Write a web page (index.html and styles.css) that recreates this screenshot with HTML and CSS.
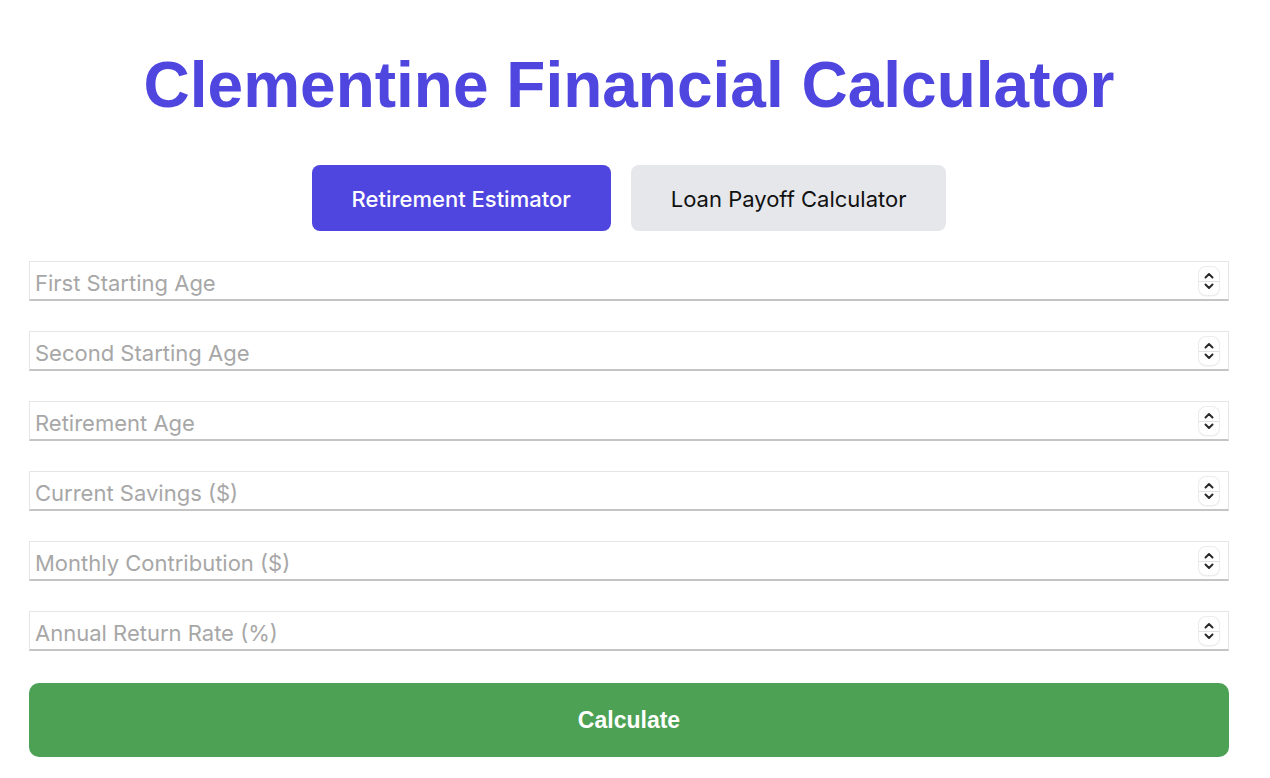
FILE: index.html
```html
<!DOCTYPE html>
<html>
<head>
<meta charset="utf-8">
<title>Clementine Financial Calculator</title>
<link rel="stylesheet" href="styles.css">
</head>
<body>
<main class="app">
  <h1 class="title">Clementine Financial Calculator</h1>
  <div class="tabs">
    <button class="tab tab-active">Retirement Estimator</button>
    <button class="tab">Loan Payoff Calculator</button>
  </div>
  <form class="form">
    <div class="field"><input class="input" type="text" placeholder="First Starting Age"><span class="spin"><svg viewBox="0 0 20 28" width="20" height="28"><path d="M6.5 10.5 L10 7 L13.5 10.5" /><path d="M6.5 17.5 L10 21 L13.5 17.5" /></svg></span></div>
    <div class="field"><input class="input" type="text" placeholder="Second Starting Age"><span class="spin"><svg viewBox="0 0 20 28" width="20" height="28"><path d="M6.5 10.5 L10 7 L13.5 10.5" /><path d="M6.5 17.5 L10 21 L13.5 17.5" /></svg></span></div>
    <div class="field"><input class="input" type="text" placeholder="Retirement Age"><span class="spin"><svg viewBox="0 0 20 28" width="20" height="28"><path d="M6.5 10.5 L10 7 L13.5 10.5" /><path d="M6.5 17.5 L10 21 L13.5 17.5" /></svg></span></div>
    <div class="field"><input class="input" type="text" placeholder="Current Savings ($)"><span class="spin"><svg viewBox="0 0 20 28" width="20" height="28"><path d="M6.5 10.5 L10 7 L13.5 10.5" /><path d="M6.5 17.5 L10 21 L13.5 17.5" /></svg></span></div>
    <div class="field"><input class="input" type="text" placeholder="Monthly Contribution ($)"><span class="spin"><svg viewBox="0 0 20 28" width="20" height="28"><path d="M6.5 10.5 L10 7 L13.5 10.5" /><path d="M6.5 17.5 L10 21 L13.5 17.5" /></svg></span></div>
    <div class="field"><input class="input" type="text" placeholder="Annual Return Rate (%)"><span class="spin"><svg viewBox="0 0 20 28" width="20" height="28"><path d="M6.5 10.5 L10 7 L13.5 10.5" /><path d="M6.5 17.5 L10 21 L13.5 17.5" /></svg></span></div>
    <button type="button" class="calc">Calculate</button>
  </form>
</main>
</body>
</html>
```

FILE: styles.css
```css
* { box-sizing: border-box; }
html, body { margin: 0; padding: 0; background: #ffffff; }
body { font-family: "Liberation Sans", Arial, sans-serif; }
.app {
  width: 1200px;
  margin: 0 0 0 29px;
  padding-top: 48px;
}
.title {
  margin: 0;
  text-align: center;
  font-family: "Liberation Sans", Arial, sans-serif;
  font-weight: 700;
  font-size: 64px;
  line-height: 74px;
  color: #4f46e0;
}
.tabs {
  display: flex;
  justify-content: center;
  gap: 20px;
  margin-top: 43px;
}
.tab {
  height: 66px;
  padding: 2px 40px 0;
  border: none;
  border-radius: 8px;
  background: #e5e7eb;
  color: #111111;
  font-family: Inter, "Noto Sans", sans-serif;
  font-size: 22px;
  font-weight: 400;
  cursor: pointer;
}
.tab-active {
  background: #4f46e0;
  color: #ffffff;
  font-weight: 500;
}
.form {
  display: flex;
  flex-direction: column;
  gap: 30px;
  margin-top: 30px;
}
.field {
  position: relative;
  height: 40px;
}
.input {
  display: block;
  width: 100%;
  height: 40px;
  margin: 0;
  padding: 4px 5px 0;
  border: 1px solid #e6e6e6;
  border-bottom: 2px solid #c4c4c4;
  border-radius: 0;
  background: #ffffff;
  font-family: Inter, "Noto Sans", sans-serif;
  font-size: 22px;
  color: #222;
  outline: none;
}
.input::placeholder { color: #a7a7a7; }
.spin {
  position: absolute;
  right: 10px;
  top: 6px;
  width: 20px;
  height: 28px;
  border-radius: 7px;
  background: #ffffff;
  box-shadow: 0 0 0 1px #ececec, 0 1px 2px rgba(0,0,0,0.12);
}
.spin::after {
  content: "";
  position: absolute;
  left: 0; right: 0; top: 14px;
  height: 1px;
  background: #e2e2e2;
}
.spin svg { display: block; position: relative; z-index: 1; }
.spin path {
  fill: none;
  stroke: #2a2a2a;
  stroke-width: 2;
  stroke-linecap: round;
  stroke-linejoin: round;
}
.calc {
  margin-top: 2px;
  height: 74px;
  border: none;
  border-radius: 10px;
  background: #4ca154;
  color: #ffffff;
  font-family: "Liberation Sans", Arial, sans-serif;
  font-weight: 700;
  font-size: 23px;
  cursor: pointer;
}
```
